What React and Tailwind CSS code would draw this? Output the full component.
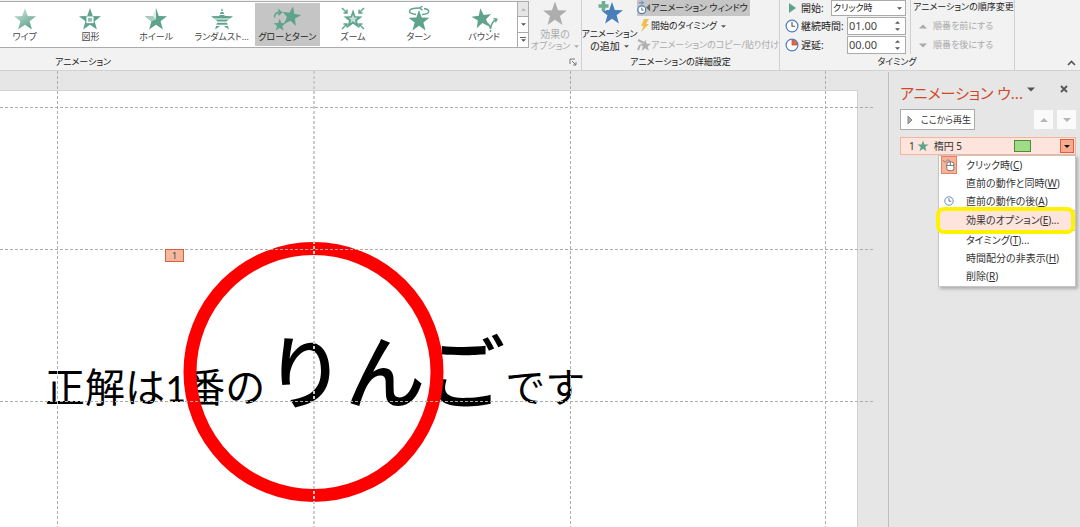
import React, { useState } from "react";

const STAR =
  "12,1 14.8,9 23,9.2 16.6,14.2 18.9,22.5 12,17.7 5.1,22.5 7.4,14.2 1,9.2 9.2,9";

const Star = ({ className = "w-6 h-6", fill = "#5fa38c", children }) => (
  <svg viewBox="0 0 24 24" className={`shrink-0 ${className}`} aria-hidden="true">
    <polygon points={STAR} fill={fill} />
    {children}
  </svg>
);

const Caret = ({ up, color = "#555", className = "w-[5px] h-[3px]" }) => (
  <svg viewBox="0 0 6 3" className={`shrink-0 ${className}`} aria-hidden="true">
    <path d={up ? "M0 3h6L3 0z" : "M0 0h6L3 3z"} fill={color} />
  </svg>
);

const WipeIcon = () => (
  <svg viewBox="0 0 24 24" className="w-6 h-6" aria-hidden="true">
    <defs>
      <linearGradient id="wipe" x1="0" y1="0" x2="0.6" y2="1">
        <stop offset="0" stopColor="#dcece6" />
        <stop offset="1" stopColor="#5fa38c" />
      </linearGradient>
    </defs>
    <polygon points={STAR} fill="url(#wipe)" />
  </svg>
);

const ShapeIcon = () => (
  <Star>
    <rect x="9.2" y="10.2" width="5.6" height="5.2" fill="#8fc0ae" stroke="#fff" strokeWidth="1.5" />
  </Star>
);

const WheelIcon = () => (
  <Star>
    <path d="M12 1v11.5L7.5 14.2 1 9.2 9.2 9z" fill="#a9cfc1" />
    <path d="M12 0v12.4L7 7z" fill="#fff" opacity="0.6" />
  </Star>
);

const BarsIcon = () => (
  <Star>
    <path d="M4 4.5h16M4 7.5h16M3 12h18M3 15.2h18M3 18.4h18" stroke="#fff" strokeWidth="1.2" />
  </Star>
);

const GrowTurnIcon = () => (
  <svg viewBox="0 0 28 24" className="w-7 h-6" aria-hidden="true">
    <polygon points={STAR} fill="#5fa38c" transform="translate(7.5 -1.5) rotate(10 12 12) scale(.88)" />
    <polygon points={STAR} fill="#5fa38c" transform="translate(0 11) scale(.56)" />
    <path d="M1.500 10.5c0-4 2-5.500 6-5M5.300 2.500l3 3-3 2.700" fill="none" stroke="#5fa38c" strokeWidth="1.600" />
  </svg>
);

const ZoomIcon = () => (
  <svg viewBox="0 0 24 24" className="w-6 h-6" aria-hidden="true">
    <polygon points={STAR} fill="#5fa38c" transform="translate(1.6 1.4) scale(.87)" />
    <polygon points={STAR} fill="#c7e0d7" transform="translate(7 6.8) scale(.42)" />
    <path
      d="M1 1l5 5M6 2.5V6H2.5M23 1l-5 5M18 2.5V6h3.5M1 22l5-5M2.5 17H6v3.5M23 22l-5-5M21.5 17H18v3.5"
      fill="none"
      stroke="#5fa38c"
      strokeWidth="1.4"
    />
  </svg>
);

const TurnIcon = () => (
  <svg viewBox="0 0 24 26" className="w-6 h-[26px]" aria-hidden="true">
    <polygon points={STAR} fill="#5fa38c" transform="translate(.6 3) scale(.95)" />
    <path
      d="M9 8.5C4.5 8 2.500 6.800 2.500 5.300 2.500 3.300 6.500 2 12 2h2M17 2.500c3 .5 4.700 1.500 4.700 2.900 0 1.600-2.700 2.800-6.700 3.100M15.500 0L12.800 2l2.700 2.200"
      fill="none"
      stroke="#5fa38c"
      strokeWidth="1.4"
    />
  </svg>
);

const BoundIcon = () => (
  <svg viewBox="0 0 28 26" className="w-7 h-[26px]" aria-hidden="true">
    <polygon points={STAR} fill="#5fa38c" transform="translate(1 1) rotate(-8 12 12) scale(.9)" />
    <path d="M16 17c2 .5 4 2.5 4.5 6 .5-5 2.3-8 6-9.5" fill="none" stroke="#5fa38c" strokeWidth="1.5" />
    <path d="M20.5 24v2" stroke="#5fa38c" strokeWidth="1.5" />
    <path d="M23.5 12.5l3.5.8-1.5 3" fill="none" stroke="#5fa38c" strokeWidth="1.3" />
  </svg>
);

const ClockIcon = ({ sector, className = "w-[14px] h-[14px]" }) => (
  <svg viewBox="0 0 14 14" className={`shrink-0 ${className}`} aria-hidden="true">
    <circle cx="7" cy="7" r="5.9" fill="#fff" stroke="#4a7ebb" strokeWidth="1.2" />
    {sector ? (
      <path d="M7 2v5h5a5 5 0 0 0-5-5z" fill="#e0694a" stroke="#c9502f" strokeWidth=".8" />
    ) : (
      <path d="M7 3v4.3h3.2" fill="none" stroke="#555" strokeWidth="1.1" />
    )}
  </svg>
);

const MouseIcon = () => (
  <svg viewBox="0 0 16 16" className="w-[14px] h-4" aria-hidden="true">
    <rect x="5.5" y="4.5" width="8" height="10" rx="2.5" fill="#fff" stroke="#666" />
    <path d="M5.5 8.5h8M9.5 4.5v4" stroke="#666" />
    <path d="M9 4C8 1.5 5.5 2 5 3.5S2 5 1.5 2.5" fill="none" stroke="#777" />
  </svg>
);

const effects = [
  { name: "ワイプ", Icon: WipeIcon },
  { name: "図形", Icon: ShapeIcon },
  { name: "ホイール", Icon: WheelIcon },
  { name: "ランダムスト…", Icon: BarsIcon },
  { name: "グローとターン", Icon: GrowTurnIcon },
  { name: "ズーム", Icon: ZoomIcon },
  { name: "ターン", Icon: TurnIcon },
  { name: "バウンド", Icon: BoundIcon },
];

const menuItems = [
  { text: "クリック時", hotkey: "C", icon: "mouse" },
  { text: "直前の動作と同時", hotkey: "W" },
  { text: "直前の動作の後", hotkey: "A", icon: "clock" },
  { text: "効果のオプション", hotkey: "E", more: true, active: true },
  { text: "タイミング", hotkey: "T", more: true },
  { text: "時間配分の非表示", hotkey: "H" },
  { text: "削除", hotkey: "R" },
];

const Gallery = () => {
  const [selected, setSelected] = useState("グローとターン");
  return (
    <div className="flex h-[47px] mt-px">
      <div className="flex-1 overflow-hidden bg-white border-y border-[#ababab]">
        <div className="flex h-full -ml-2 py-px">
          {effects.map(({ name, Icon }) => (
            <button
              key={name}
              onClick={() => setSelected(name)}
              className={`flex-1 min-w-0 flex flex-col items-center text-[9px] leading-3 whitespace-nowrap ${
                selected === name ? "bg-[#c5c5c5] text-[#222]" : "text-[#444]"
              }`}
            >
              <span className="h-7 flex items-center pt-1">
                <Icon />
              </span>
              {name}
            </button>
          ))}
        </div>
      </div>
      <div className="w-3 flex flex-col border border-[#ababab] divide-y divide-[#ababab] bg-white">
        <button aria-label="前の行" className="flex-1 flex items-center justify-center bg-[#e6e6e6]">
          <Caret up color="#b5b5b5" />
        </button>
        <button aria-label="次の行" className="flex-1 flex items-center justify-center">
          <Caret />
        </button>
        <button aria-label="その他" className="flex-1 flex flex-col gap-px items-center justify-center">
          <span className="w-[6px] h-px bg-[#666]" />
          <Caret />
        </button>
      </div>
    </div>
  );
};

const Spinner = ({ id, value }) => {
  const [text, setText] = useState(value);
  return (
    <div className="flex-1 flex h-full bg-white border border-[#ababab]">
      <input
        id={id}
        value={text}
        onChange={(e) => setText(e.target.value)}
        className="w-0 flex-1 pl-px text-[11px] text-[#444] outline-none"
      />
      <div className="w-3 flex flex-col items-center justify-between py-[3px] pr-1">
        <button aria-label="増やす" className="flex">
          <Caret up />
        </button>
        <button aria-label="減らす" className="flex">
          <Caret />
        </button>
      </div>
    </div>
  );
};

const GroupLabel = ({ children }) => (
  <span className="h-4 shrink-0 text-center text-[9px] leading-4">{children}</span>
);

const Ribbon = () => (
  <header className="flex h-[71px] shrink-0 bg-[#f2f2f2] border-b border-[#d2d2d2] text-[#222]">
    <section className="flex-1 max-w-[582px] flex flex-col">
      <div className="flex h-[55px]">
        <div className="flex-1">
          <Gallery />
        </div>
        <button
          className="w-[52px] flex flex-col items-center text-[10px] leading-3 text-[#aaa] whitespace-nowrap"
          disabled
        >
          <Star className="w-[26px] h-[27px] mb-px" fill="#adadad" />
          <span>効果の</span>
          <span className="flex items-center gap-1 text-[9px]">
            オプション
            <Caret color="#aaa" />
          </span>
        </button>
      </div>
      <div className="flex justify-between h-4 pl-[55px] pr-1">
        <GroupLabel>アニメーション</GroupLabel>
        <button aria-label="アニメーションの設定">
          <svg viewBox="0 0 8 8" className="w-2 h-2">
            <path d="M1 6V1h5M3 3l4 4M7 4v3H4" fill="none" stroke="#777" />
          </svg>
        </button>
      </div>
    </section>

    <section className="w-[198px] shrink-0 flex flex-col border-l border-[#d0d0d0]">
      <div className="flex h-[55px]">
        <button className="w-[55px] shrink-0 flex flex-col items-center text-[9px] leading-3 whitespace-nowrap">
          <svg viewBox="0 0 30 28" className="w-[30px] h-7" aria-hidden="true">
            <polygon points={STAR} fill="#4a7ebb" transform="translate(5 1)" />
            <path d="M3.5 6h10M8.5 1v10" stroke="#f2f2f2" strokeWidth="5" />
            <path d="M3.5 6h10M8.5 1v10" stroke="#6fae96" strokeWidth="3.6" />
          </svg>
          <span>アニメーション</span>
          <span className="flex items-center gap-1 text-[10px]">
            の追加
            <Caret />
          </span>
        </button>
        <div className="flex-1 flex flex-col gap-px text-[9px] whitespace-nowrap">
          <button className="h-4 w-[113px] flex items-center bg-[#c5c5c5]">
            <svg viewBox="0 0 16 16" className="w-[14px] h-4 shrink-0" aria-hidden="true">
              <circle cx="5.5" cy="10" r="4.5" fill="#fff" stroke="#4a7ebb" strokeWidth="1.4" />
              <path d="M5.500 7.500v3h2" fill="none" stroke="#555" />
              <path d="M2 2h5M5 0l2.500 2L5 4" fill="none" stroke="#4a7ebb" />
              <path d="M15 3v9l-4.500-4.500z" fill="#666" />
            </svg>
            アニメーション ウィンドウ
          </button>
          <button className="h-[18px] flex items-center">
            <svg viewBox="0 0 14 16" className="w-[14px] h-4 shrink-0" aria-hidden="true">
              <path d="M7 1h5L9 6h3L4 14l2.5-6H4z" fill="#f0bd55" />
            </svg>
            開始のタイミング
            <Caret className="w-[5px] h-[3px] ml-1" />
          </button>
          <button className="h-[18px] flex items-center text-[#aaa]" disabled>
            <svg viewBox="0 0 14 16" className="w-[14px] h-4 shrink-0" aria-hidden="true">
              <polygon points={STAR} fill="#b0b0b0" transform="translate(2 2) scale(.52)" />
              <path d="M1 3l6 3M3 8l-2 5" stroke="#b0b0b0" strokeWidth="2" />
            </svg>
            アニメーションのコピー/貼り付け
          </button>
        </div>
      </div>
      <GroupLabel>アニメーションの詳細設定</GroupLabel>
    </section>

    <section className="w-[235px] shrink-0 flex flex-col border-l border-[#d0d0d0]">
      <div className="flex h-[55px] text-[10px]">
        <div className="w-[126px] shrink-0 pl-[5px] flex flex-col gap-px">
          <div className="flex items-center h-4">
            <svg viewBox="0 0 14 14" className="w-[14px] h-[14px] shrink-0" aria-hidden="true">
              <path d="M4 2l7 5-7 5z" fill="#5fa38c" />
            </svg>
            <label htmlFor="start" className="w-8 pl-[2px]">
              開始:
            </label>
            <div className="relative flex-1 h-full">
              <select
                id="start"
                className="appearance-none w-full h-full pl-px bg-white border border-[#ababab] text-[9px] leading-3"
              >
                <option>クリック時</option>
                <option>直前の動作と同時</option>
                <option>直前の動作の後</option>
              </select>
              <span className="absolute right-1 top-0 h-full flex items-center pointer-events-none">
                <Caret />
              </span>
            </div>
          </div>
          <div className="flex items-center h-[18px]">
            <ClockIcon />
            <label htmlFor="duration" className="w-12 whitespace-nowrap pl-[2px]">
              継続時間:
            </label>
            <Spinner id="duration" value="01.00" />
          </div>
          <div className="flex items-center h-[18px]">
            <ClockIcon sector />
            <label htmlFor="delay" className="w-12 pl-[2px]">
              遅延:
            </label>
            <Spinner id="delay" value="00.00" />
          </div>
        </div>
        <div className="ml-1 pl-[2px] flex-1 flex flex-col gap-px border-l border-[#d0d0d0] whitespace-nowrap text-[9px]">
          <span className="h-4 leading-[14px]">アニメーションの順序変更</span>
          <button className="h-[18px] pl-[6px] flex items-center gap-[6px] text-[#aaa]" disabled>
            <Caret up color="#aaa" className="w-2 h-[5px]" />
            順番を前にする
          </button>
          <button className="h-[18px] pl-[6px] flex items-center gap-[6px] text-[#aaa]" disabled>
            <Caret color="#aaa" className="w-2 h-[5px]" />
            順番を後にする
          </button>
        </div>
      </div>
      <GroupLabel>タイミング</GroupLabel>
    </section>

    <div className="w-[66px] shrink-0 flex items-end justify-end p-1 border-l border-[#d0d0d0]">
      <button aria-label="リボンを折りたたむ">
        <svg viewBox="0 0 9 6" className="w-[9px] h-[6px]">
          <path d="M1 5l3.5-3.5L8 5" fill="none" stroke="#555" strokeWidth="1.6" />
        </svg>
      </button>
    </div>
  </header>
);

const SlideArea = () => (
  <section className="relative flex-1 min-w-0 overflow-hidden pt-[19px] pr-[30px]">
    <div className="h-full bg-white border-t border-r border-[#d2d2d2]">
      <p className="pt-[224px] pl-[45px] text-[40px] leading-[120px] text-black whitespace-nowrap font-[Carlito,'Noto_Sans_CJK_JP',sans-serif] [font-feature-settings:normal]">
        正解は1番の<span className="text-[80px] font-medium">りんご</span>です
      </p>
    </div>
    {/* ellipse shape, drawing guides and the click order tag */}
    <svg className="absolute left-0 top-0 w-[873px] h-full" aria-hidden="true">
      <circle cx="313.5" cy="301" r="123.5" fill="none" stroke="#f00" strokeWidth="13" />
      <g stroke="#adadad" strokeWidth="1" strokeDasharray="3 2">
        <path d="M0 36.5h873M0 178.5h873M0 330.5h873" />
        <path d="M57.5 0v460M570.5 0v460M825.5 0v460" />
        <path d="M314 0v460" stroke="#ccc" strokeWidth="2" />
      </g>
    </svg>
    <span className="absolute left-[165px] top-[178px] w-[19px] h-[13px] text-center bg-[#f5b89f] border border-[#d9603c] text-[9px] leading-[11px] text-[#444]">
      1
    </span>
  </section>
);

const EffectMenu = () => (
  <ul className="ml-[38px] pb-px bg-white border border-[#c6c6c6] shadow-[2px_2px_3px_rgba(0,0,0,0.25)] text-[10px] text-[#333]">
    {menuItems.map((item) => (
      <li key={item.hotkey} className="relative">
        <button
          className={`w-full flex items-center text-left whitespace-nowrap ${
            item.active ? "h-[21px] bg-[#fde4dc] border-y border-[#f5b59c]" : "h-[18px]"
          }`}
        >
          <span className="w-[27px] shrink-0 pl-[2px] flex items-center">
            {item.icon === "mouse" && (
              <span className="bg-[#f8b299] border border-[#ef7f5c]">
                <MouseIcon />
              </span>
            )}
            {item.icon === "clock" && <ClockIcon className="w-[10px] h-[10px] ml-[3px]" />}
          </span>
          {item.text}(<u>{item.hotkey}</u>){item.more && "..."}
        </button>
        {item.active && (
          <span className="absolute -left-[3px] right-0 -inset-y-[3px] border-4 border-[#fff200] rounded-lg pointer-events-none" />
        )}
      </li>
    ))}
  </ul>
);

const AnimationPane = () => (
  <aside className="w-[192px] shrink-0 mt-px pl-[11px] pr-1 border-l border-[#bdbdbd]">
    <div className="flex h-[37px] pt-[9px]">
      <h2 className="flex-1 min-w-0 text-[15px] leading-6 text-[#d24726] whitespace-nowrap">アニメーション ウ...</h2>
      <button aria-label="作業ウィンドウのオプション" className="h-4 pr-[25px]">
        <Caret className="w-2 h-[5px]" />
      </button>
      <button aria-label="閉じる" className="h-4 pr-2">
        <svg viewBox="0 0 8 8" className="w-2 h-2">
          <path d="M1 1l6 6M7 1L1 7" stroke="#555" strokeWidth="1.8" />
        </svg>
      </button>
    </div>
    <div className="flex items-center gap-1">
      <button className="w-[75px] h-[21px] flex items-center gap-2 pl-[6px] bg-white border border-[#ababab] text-[9px] text-[#333] whitespace-nowrap">
        <svg viewBox="0 0 6 10" className="w-[6px] h-[10px] shrink-0" aria-hidden="true">
          <path d="M1 1v8l4-4z" fill="#aaa" stroke="#888" />
        </svg>
        ここから再生
      </button>
      <button aria-label="上へ" className="ml-auto w-[19px] h-[19px] flex items-center justify-center bg-[#fafafa]" disabled>
        <Caret up color="#b5b5b5" className="w-2 h-1" />
      </button>
      <button aria-label="下へ" className="w-[19px] h-[19px] flex items-center justify-center bg-[#fafafa]" disabled>
        <Caret color="#b5b5b5" className="w-2 h-1" />
      </button>
    </div>
    <div className="flex items-center h-[18px] mt-[7px] pl-2 pr-px bg-[#fde4dc] border border-[#f5b59c] text-[10px] text-[#333]">
      <span>1</span>
      <Star className="w-3 h-3 ml-[2px] mr-[5px]" />
      <span>楕円 5</span>
      <span className="ml-auto w-[17px] h-3 bg-[#9fdc86] border border-[#4e8a38]" />
      <button
        aria-label="効果メニュー"
        className="ml-[29px] w-[14px] h-[14px] flex items-center justify-center bg-[#f7ab90] border border-[#ea5b35]"
      >
        <Caret color="#111" className="w-[6px] h-[3px]" />
      </button>
    </div>
    <EffectMenu />
  </aside>
);

const App = () => {
  return (
    <div className="flex flex-col h-screen overflow-hidden bg-[#e6e6e6] font-['Noto_Sans','Noto_Sans_CJK_JP',sans-serif] [font-feature-settings:'palt']">
      <Ribbon />
      <main className="flex flex-1 min-h-0">
        <SlideArea />
        <AnimationPane />
      </main>
    </div>
  );
};

export default App;
